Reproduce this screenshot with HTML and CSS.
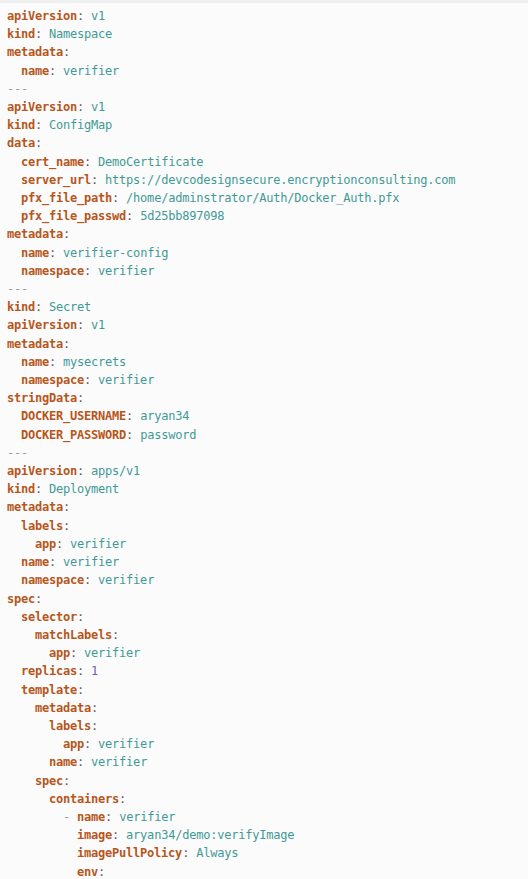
FILE: index.html
```html
<!DOCTYPE html>
<html>
<head>
<meta charset="utf-8">
<link rel="stylesheet" href="styles.css">
</head>
<body>
<div class="topbar"></div>
<pre class="code"><span class="k">apiVersion</span><span class="p">:</span> <span class="s">v1</span>
<span class="k">kind</span><span class="p">:</span> <span class="s">Namespace</span>
<span class="k">metadata</span><span class="p">:</span>
  <span class="k">name</span><span class="p">:</span> <span class="s">verifier</span>
<span class="c">---</span>
<span class="k">apiVersion</span><span class="p">:</span> <span class="s">v1</span>
<span class="k">kind</span><span class="p">:</span> <span class="s">ConfigMap</span>
<span class="k">data</span><span class="p">:</span>
  <span class="k">cert_name</span><span class="p">:</span> <span class="s">DemoCertificate</span>
  <span class="k">server_url</span><span class="p">:</span> <span class="s">https://devcodesignsecure.encryptionconsulting.com</span>
  <span class="k">pfx_file_path</span><span class="p">:</span> <span class="s">/home/adminstrator/Auth/Docker_Auth.pfx</span>
  <span class="k">pfx_file_passwd</span><span class="p">:</span> <span class="s">5d25bb897098</span>
<span class="k">metadata</span><span class="p">:</span>
  <span class="k">name</span><span class="p">:</span> <span class="s">verifier-config</span>
  <span class="k">namespace</span><span class="p">:</span> <span class="s">verifier</span>
<span class="c">---</span>
<span class="k">kind</span><span class="p">:</span> <span class="s">Secret</span>
<span class="k">apiVersion</span><span class="p">:</span> <span class="s">v1</span>
<span class="k">metadata</span><span class="p">:</span>
  <span class="k">name</span><span class="p">:</span> <span class="s">mysecrets</span>
  <span class="k">namespace</span><span class="p">:</span> <span class="s">verifier</span>
<span class="k">stringData</span><span class="p">:</span>
  <span class="k">DOCKER_USERNAME</span><span class="p">:</span> <span class="s">aryan34</span>
  <span class="k">DOCKER_PASSWORD</span><span class="p">:</span> <span class="s">password</span>
<span class="c">---</span>
<span class="k">apiVersion</span><span class="p">:</span> <span class="s">apps/v1</span>
<span class="k">kind</span><span class="p">:</span> <span class="s">Deployment</span>
<span class="k">metadata</span><span class="p">:</span>
  <span class="k">labels</span><span class="p">:</span>
    <span class="k">app</span><span class="p">:</span> <span class="s">verifier</span>
  <span class="k">name</span><span class="p">:</span> <span class="s">verifier</span>
  <span class="k">namespace</span><span class="p">:</span> <span class="s">verifier</span>
<span class="k">spec</span><span class="p">:</span>
  <span class="k">selector</span><span class="p">:</span>
    <span class="k">matchLabels</span><span class="p">:</span>
      <span class="k">app</span><span class="p">:</span> <span class="s">verifier</span>
  <span class="k">replicas</span><span class="p">:</span> <span class="n">1</span>
  <span class="k">template</span><span class="p">:</span>
    <span class="k">metadata</span><span class="p">:</span>
      <span class="k">labels</span><span class="p">:</span>
        <span class="k">app</span><span class="p">:</span> <span class="s">verifier</span>
      <span class="k">name</span><span class="p">:</span> <span class="s">verifier</span>
    <span class="k">spec</span><span class="p">:</span>
      <span class="k">containers</span><span class="p">:</span>
        <span class="c">-</span> <span class="k">name</span><span class="p">:</span> <span class="s">verifier</span>
          <span class="k">image</span><span class="p">:</span> <span class="s">aryan34/demo:verifyImage</span>
          <span class="k">imagePullPolicy</span><span class="p">:</span> <span class="s">Always</span>
          <span class="k">env</span><span class="p">:</span></pre>
</body>
</html>
```
FILE: styles.css
```css
html, body {
  margin: 0;
  padding: 0;
  background: #fbfbfb;
  height: 100%;
  overflow: hidden;
}
.topbar {
  height: 3px;
  background: #efefef;
}
.code {
  margin: 0;
  padding: 4px 0 0 7px;
  font-family: "DejaVu Sans Mono", "Liberation Mono", monospace;
  font-size: 12px;
  letter-spacing: -0.22px;
  line-height: 18.2px;
  color: #555;
}
.k {
  color: #b7561b;
  font-weight: bold;
}
.s {
  color: #3f9a96;
}
.n {
  color: #6a5fb3;
}
.p {
  color: #5a5a5a;
}
.c {
  color: #9a9a9a;
}
```
